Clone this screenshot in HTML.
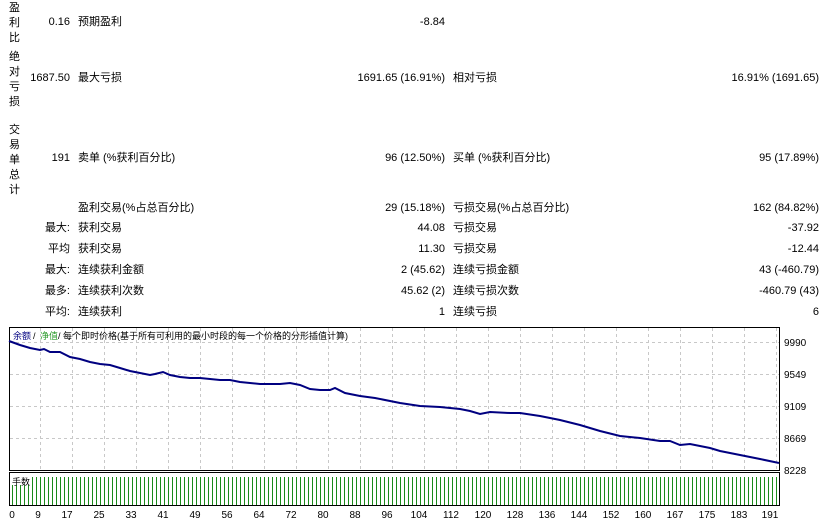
<!DOCTYPE html>
<html><head><meta charset="utf-8"><style>
body{margin:0;width:826px;height:523px;background:#fff;overflow:hidden;position:relative;font-family:"Liberation Sans","Noto Sans CJK SC",sans-serif;font-size:11px;color:#000}
.t{position:absolute;white-space:nowrap;line-height:13px}
.r{text-align:right}
.v{position:absolute;left:9px;width:12px;line-height:15px;font-size:11px}
</style></head><body>
<div class="v" style="top:1px">盈<br>利<br>比</div>
<div class="v" style="top:50px">绝<br>对<br>亏<br>损</div>
<div class="v" style="top:123px">交<br>易<br>单<br>总<br>计</div>

<div class="t r" style="right:756px;top:16px">0.16</div><div class="t" style="left:78px;top:16px">预期盈利</div><div class="t r" style="right:381px;top:16px">-8.84</div>

<div class="t r" style="right:756px;top:72px">1687.50</div><div class="t" style="left:78px;top:72px">最大亏损</div><div class="t r" style="right:381px;top:72px">1691.65 (16.91%)</div><div class="t" style="left:453px;top:72px">相对亏损</div><div class="t r" style="right:7px;top:72px">16.91% (1691.65)</div>

<div class="t r" style="right:756px;top:152px">191</div><div class="t" style="left:78px;top:152px">卖单 (%获利百分比)</div><div class="t r" style="right:381px;top:152px">96 (12.50%)</div><div class="t" style="left:453px;top:152px">买单 (%获利百分比)</div><div class="t r" style="right:7px;top:152px">95 (17.89%)</div>

<div class="t" style="left:78px;top:202px">盈利交易(%占总百分比)</div><div class="t r" style="right:381px;top:202px">29 (15.18%)</div><div class="t" style="left:453px;top:202px">亏损交易(%占总百分比)</div><div class="t r" style="right:7px;top:202px">162 (84.82%)</div>

<div class="t r" style="right:756px;top:222px">最大:</div><div class="t" style="left:78px;top:222px">获利交易</div><div class="t r" style="right:381px;top:222px">44.08</div><div class="t" style="left:453px;top:222px">亏损交易</div><div class="t r" style="right:7px;top:222px">-37.92</div>

<div class="t r" style="right:756px;top:243px">平均</div><div class="t" style="left:78px;top:243px">获利交易</div><div class="t r" style="right:381px;top:243px">11.30</div><div class="t" style="left:453px;top:243px">亏损交易</div><div class="t r" style="right:7px;top:243px">-12.44</div>

<div class="t r" style="right:756px;top:264px">最大:</div><div class="t" style="left:78px;top:264px">连续获利金额</div><div class="t r" style="right:381px;top:264px">2 (45.62)</div><div class="t" style="left:453px;top:264px">连续亏损金额</div><div class="t r" style="right:7px;top:264px">43 (-460.79)</div>

<div class="t r" style="right:756px;top:285px">最多:</div><div class="t" style="left:78px;top:285px">连续获利次数</div><div class="t r" style="right:381px;top:285px">45.62 (2)</div><div class="t" style="left:453px;top:285px">连续亏损次数</div><div class="t r" style="right:7px;top:285px">-460.79 (43)</div>

<div class="t r" style="right:756px;top:306px">平均:</div><div class="t" style="left:78px;top:306px">连续获利</div><div class="t r" style="right:381px;top:306px">1</div><div class="t" style="left:453px;top:306px">连续亏损</div><div class="t r" style="right:7px;top:306px">6</div>

<svg style="position:absolute;left:0;top:0" width="826" height="523">
<defs><pattern id="b" x="12" y="0" width="4" height="10" patternUnits="userSpaceOnUse"><rect x="0" y="0" width="1" height="10" fill="#1a8a1a"/></pattern></defs>
<g stroke="#c8c8c8" stroke-dasharray="3,3" stroke-width="1">
<line x1="10" y1="342.5" x2="779" y2="342.5"/><line x1="10" y1="374.5" x2="779" y2="374.5"/><line x1="10" y1="406.5" x2="779" y2="406.5"/><line x1="10" y1="438.5" x2="779" y2="438.5"/>
<path d="M40.5 328V470M72.5 328V470M104.5 328V470M136.5 328V470M168.5 328V470M200.5 328V470M232.5 328V470M264.5 328V470M296.5 328V470M328.5 328V470M360.5 328V470M392.5 328V470M424.5 328V470M456.5 328V470M488.5 328V470M520.5 328V470M552.5 328V470M584.5 328V470M616.5 328V470M648.5 328V470M680.5 328V470M712.5 328V470M744.5 328V470M776.5 328V470"/>
</g>
<rect x="9.5" y="327.5" width="770" height="143" fill="none" stroke="#000"/>
<rect x="9.5" y="472.5" width="770" height="33" fill="none" stroke="#000"/>
<rect x="12" y="477" width="766" height="28" fill="url(#b)"/>
<rect x="11" y="477" width="20" height="8" fill="#fff"/>
<polyline fill="none" stroke="#000080" stroke-width="2" points="9,341 20,345 30,348 40,350 44,349 50,352 60,352 70,357 80,359 90,362 100,364 110,365 120,368 130,371 140,373 150,375 155,374 163,372 170,375 180,377 190,378 200,378 210,379 220,380 230,380 240,382 250,383 260,384 270,384 280,384 290,383 300,385 310,389 320,390 330,390 335,388 345,393 360,396 375,398 400,403 420,406 440,407 460,409 470,411 480,414 490,412 510,413 520,413 540,416 560,420 580,425 600,431 620,436 640,438 660,441 670,441 680,445 690,444 710,448 720,451 740,455 760,459 779,463"/>
<g font-family="Liberation Sans,sans-serif" font-size="10" fill="#000">
<text x="784" y="346">9990</text><text x="784" y="378">9549</text><text x="784" y="410">9109</text><text x="784" y="442">8669</text><text x="784" y="474">8228</text>
</g>
<g font-family="Liberation Sans,sans-serif" font-size="10" fill="#000" text-anchor="middle">
<text x="12" y="518">0</text><text x="38" y="518">9</text><text x="67" y="518">17</text><text x="99" y="518">25</text><text x="131" y="518">33</text><text x="163" y="518">41</text><text x="195" y="518">49</text><text x="227" y="518">56</text><text x="259" y="518">64</text><text x="291" y="518">72</text><text x="323" y="518">80</text><text x="355" y="518">88</text><text x="387" y="518">96</text><text x="419" y="518">104</text><text x="451" y="518">112</text><text x="483" y="518">120</text><text x="515" y="518">128</text><text x="547" y="518">136</text><text x="579" y="518">144</text><text x="611" y="518">152</text><text x="643" y="518">160</text><text x="675" y="518">167</text><text x="707" y="518">175</text><text x="739" y="518">183</text><text x="770" y="518">191</text>
</g>
<g font-family="Liberation Sans,Noto Sans CJK SC,sans-serif" font-size="9">
<text x="13" y="339" fill="#000080">余额</text><text x="33" y="339">/</text><text x="40" y="339" fill="#2a9a2a">净值</text><text x="58" y="339">/ 每个即时价格(基于所有可利用的最小时段的每一个价格的分形插值计算)</text>
<text x="12" y="485">手数</text>
</g>
</svg>
</body></html>
